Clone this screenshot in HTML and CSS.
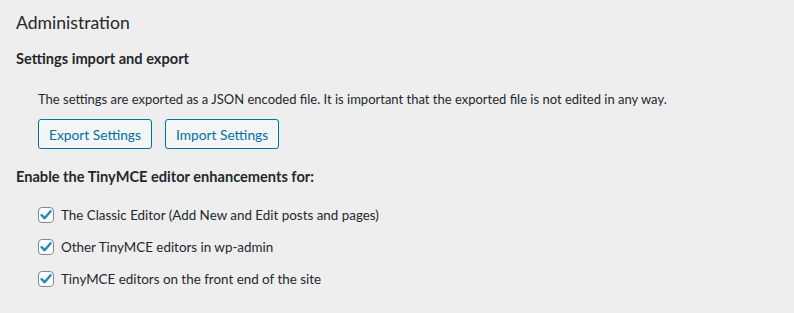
FILE: index.html
```html
<!DOCTYPE html>
<html lang="en">
<head>
    <meta charset="UTF-8">
    <meta name="viewport" content="width=device-width, initial-scale=1.0">
    <title>Administration</title>
    <link rel="stylesheet" href="styles.css">
</head>
<body>
    <div class="wrap">
        <h2>Administration</h2>

        <h3 class="section-title">Settings import and export</h3>
        <div class="indent">
            <p class="note">The settings are exported as a JSON encoded file. It is important that the exported file is not edited in any way.</p>
            <div class="buttons">
                <button type="button" class="button">Export Settings</button>
                <button type="button" class="button">Import Settings</button>
            </div>
        </div>

        <h3 class="section-title enable-title">Enable the TinyMCE editor enhancements for:</h3>
        <ul class="options">
            <li>
                <label class="option">
                    <span class="checkbox"><svg viewBox="0 0 16 16" width="16" height="16"><path d="M3.6 8.2 6.6 11.2 12.6 4.2" fill="none" stroke="#1e8cbe" stroke-width="2.4" stroke-linecap="round" stroke-linejoin="round"/></svg></span>
                    The Classic Editor (Add New and Edit posts and pages)
                </label>
            </li>
            <li>
                <label class="option">
                    <span class="checkbox"><svg viewBox="0 0 16 16" width="16" height="16"><path d="M3.6 8.2 6.6 11.2 12.6 4.2" fill="none" stroke="#1e8cbe" stroke-width="2.4" stroke-linecap="round" stroke-linejoin="round"/></svg></span>
                    Other TinyMCE editors in wp-admin
                </label>
            </li>
            <li>
                <label class="option">
                    <span class="checkbox"><svg viewBox="0 0 16 16" width="16" height="16"><path d="M3.6 8.2 6.6 11.2 12.6 4.2" fill="none" stroke="#1e8cbe" stroke-width="2.4" stroke-linecap="round" stroke-linejoin="round"/></svg></span>
                    TinyMCE editors on the front end of the site
                </label>
            </li>
        </ul>
    </div>
</body>
</html>
```

FILE: styles.css
```css
body {
    background-color: #eeeeee;
    color: #23282d;
    font-family: 'Lato', 'Liberation Sans', sans-serif;
    font-size: 13px;
    margin: 0;
    padding: 0;
}

.wrap {
    padding: 10px 16px 0 16px;
}

h2 {
    font-size: 17.6px;
    font-weight: 400;
    line-height: 26px;
    margin: 0;
}

.section-title {
    font-size: 14.6px;
    font-weight: 700;
    line-height: 20px;
    margin: 13px 0 0 0;
}

.enable-title {
    margin-top: 18px;
}

.indent {
    padding-left: 22px;
}

.note {
    line-height: 20px;
    margin: 20px 0 0 0;
}

.buttons {
    display: flex;
    gap: 13px;
    margin-top: 10px;
}

.button {
    background-color: #f3f5f6;
    color: #0071a1;
    border: 1px solid #0071a1;
    border-radius: 3px;
    font-family: inherit;
    font-size: 13.75px;
    height: 30px;
    padding: 0 10px;
    cursor: pointer;
}

.button:hover {
    background-color: #f1f1f1;
}

.options {
    list-style: none;
    margin: 12px 0 0 0;
    padding: 0 0 0 22px;
}

.option {
    display: flex;
    align-items: center;
    gap: 7px;
    height: 32px;
    font-size: 13.4px;
    cursor: pointer;
}

.checkbox {
    display: flex;
    width: 14px;
    height: 14px;
    border: 1px solid #7e8993;
    border-radius: 4px;
    background-color: #ffffff;
    align-items: center;
    justify-content: center;
}

.checkbox svg {
    flex: none;
}
```
